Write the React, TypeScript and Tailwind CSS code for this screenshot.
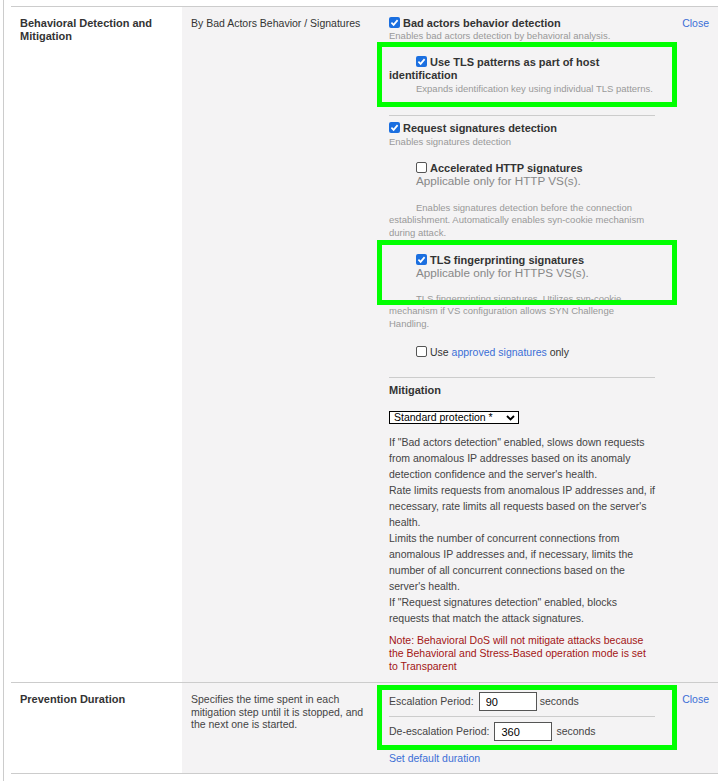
import React from 'react'

const Check = ({ checked }: { checked?: boolean }) =>
  checked ? (
    <span className="relative inline-block w-[11px] h-[11px] rounded-[2px] bg-[#1b6fe0] mr-[3px] align-top">
      <svg viewBox="0 0 11 11" className="absolute inset-0 w-[11px] h-[11px]">
        <path d="M2.4 5.7l2.2 2.2 4-4.8" stroke="#fff" strokeWidth="1.7" fill="none" />
      </svg>
    </span>
  ) : (
    <span className="inline-block w-[11px] h-[11px] rounded-[2px] border border-[#555] bg-white mr-[3px] align-top" />
  )

const Highlight = ({ top }: { top: string }) => (
  <div className={`pointer-events-none absolute left-[-3px] w-[300px] h-[65px] border-[5px] border-[#00ff00] ${top}`} />
)

const App = () => {
  return (
    <div className="min-h-screen bg-white font-['Liberation_Sans',Arial,sans-serif] text-[#333]">
      <div className="ml-[3px] min-h-screen w-[715px] border-l border-[#ccc] pl-[7px] pt-[6px]">
        {/* Behavioral detection row */}
        <div className="flex border-t border-[#ccc]">
          <div className="w-[171px] shrink-0 px-[9px] pt-[10px] text-[11px] font-bold leading-[13px]">
            Behavioral Detection and Mitigation
          </div>
          <div className="w-[198px] shrink-0 bg-[#f4f3f4] px-[9px] pt-[10px] text-[10.5px] leading-[12.5px]">
            By Bad Actors Behavior / Signatures
          </div>
          <div className="relative flex flex-1 justify-between bg-[#f4f3f4] pl-[9px] pr-[9px] pt-[10px] pb-[9px]">
            <div className="w-[266px]">
              <div className="text-[11px] font-bold leading-[13px]">
                <Check checked />Bad actors behavior detection
              </div>
              <div className="text-[9.5px] leading-[11px] text-[#999]">
                Enables bad actors detection by behavioral analysis.
              </div>
              <div className="mt-[15px] indent-[27px]">
                <div className="text-[11px] font-bold leading-[13px]">
                  <Check checked />Use TLS patterns as part of host identification
                </div>
                <div className="mt-[1px] text-[9.5px] leading-[11px] text-[#999]">
                  Expands identification key using individual TLS patterns.
                </div>
              </div>

              <hr className="mt-[21px] border-[#ccc]" />

              <div className="mt-[6px] text-[11px] font-bold leading-[13px]">
                <Check checked />Request signatures detection
              </div>
              <div className="mt-[1px] text-[9.5px] leading-[11px] text-[#999]">Enables signatures detection</div>

              <div className="mt-[15px] indent-[27px]">
                <div className="text-[11px] font-bold leading-[12px]">
                  <Check />Accelerated HTTP signatures
                </div>
                <div className="text-[11.7px] leading-[13.5px] text-[#888]">Applicable only for HTTP VS(s).</div>
                <div className="mt-[14px] text-[9.5px] leading-[12.5px] text-[#999]">
                  Enables signatures detection before the connection establishment. Automatically enables syn-cookie
                  mechanism during attack.
                </div>
              </div>

              <div className="mt-[15px] indent-[27px]">
                <div className="text-[11px] font-bold leading-[12px]">
                  <Check checked />TLS fingerprinting signatures
                </div>
                <div className="text-[11.7px] leading-[13.5px] text-[#888]">Applicable only for HTTPS VS(s).</div>
                <div className="mt-[13px] text-[9.5px] leading-[12.5px] text-[#999]">
                  TLS fingerprinting signatures. Utilizes syn-cookie mechanism if VS configuration allows SYN Challenge
                  Handling.
                </div>
                <div className="mt-[16px] text-[10.5px] leading-[12px]">
                  <Check />Use <span className="text-[#3b6fd6]">approved signatures</span> only
                </div>
              </div>

              <hr className="mt-[19px] border-[#ccc]" />

              <div className="mt-[6px] text-[11px] font-bold leading-[13px]">Mitigation</div>
              <div className="mt-[14px] flex h-[13px] w-[130px] items-center justify-between border border-black bg-white pl-[4px] pr-[3px] text-[10.5px] leading-none text-black">
                <span>Standard protection *</span>
                <svg viewBox="0 0 9 6" className="w-[9px] h-[6px]">
                  <path d="M1 1l3.5 3.5L8 1" stroke="#000" strokeWidth="1.9" fill="none" />
                </svg>
              </div>
              <p className="mt-[10px] w-[268px] text-[10.5px] leading-[16px] text-[#444]">
                If "Bad actors detection" enabled, slows down requests from anomalous IP addresses based on its anomaly
                detection confidence and the server's health.
                <br />
                Rate limits requests from anomalous IP addresses and, if necessary, rate limits all requests based on the
                server's health.
                <br />
                Limits the number of concurrent connections from anomalous IP addresses and, if necessary, limits the
                number of all concurrent connections based on the server's health.
                <br />
                If "Request signatures detection" enabled, blocks requests that match the attack signatures.
              </p>
              <p className="mt-[8px] text-[10.5px] leading-[13px] text-[#a31515]">
                Note: Behavioral DoS will not mitigate attacks because the Behavioral and Stress-Based operation mode is set
                to Transparent
              </p>
            </div>
            <a className="text-[10.5px] leading-[12px] text-[#3b6fd6]">Close</a>

            <Highlight top="top-[35px]" />
            <Highlight top="top-[233px]" />
          </div>
        </div>

        {/* Prevention duration row */}
        <div className="flex border-t border-[#ccc]">
          <div className="w-[171px] shrink-0 px-[9px] pt-[10px] text-[11px] font-bold leading-[13px]">
            Prevention Duration
          </div>
          <div className="w-[198px] shrink-0 bg-[#f4f3f4] px-[9px] pt-[10px] text-[10.5px] leading-[12.5px] text-[#444]">
            Specifies the time spent in each mitigation step until it is stopped, and the next one is started.
          </div>
          <div className="relative flex flex-1 justify-between bg-[#f4f3f4] pl-[9px] pr-[9px] pt-[9px] pb-[9px]">
            <div className="w-[266px] text-[10.5px]">
              <div className="flex h-[19px] items-center text-[#444]">
                Escalation Period:
                <input
                  defaultValue="90"
                  className="ml-[5px] h-[19px] w-[58px] border border-[#555] bg-white px-[6px] text-[11px] text-black outline-none"
                />
                <span className="ml-[3px]">seconds</span>
              </div>
              <hr className="mt-[5px] border-[#ccc]" />
              <div className="mt-[5px] flex h-[19px] items-center text-[#444]">
                De-escalation Period:
                <input
                  defaultValue="360"
                  className="ml-[5px] h-[19px] w-[58px] border border-[#555] bg-white px-[6px] text-[11px] text-black outline-none"
                />
                <span className="ml-[4px]">seconds</span>
              </div>
              <div className="mt-[11px] leading-[12px] text-[#3b6fd6]">Set default duration</div>
            </div>
            <a className="mt-[1px] text-[10.5px] leading-[12px] text-[#3b6fd6]">Close</a>

            <Highlight top="top-[2px]" />
          </div>
        </div>
        <div className="border-t border-[#ccc]" />
      </div>
    </div>
  )
}

export default App
